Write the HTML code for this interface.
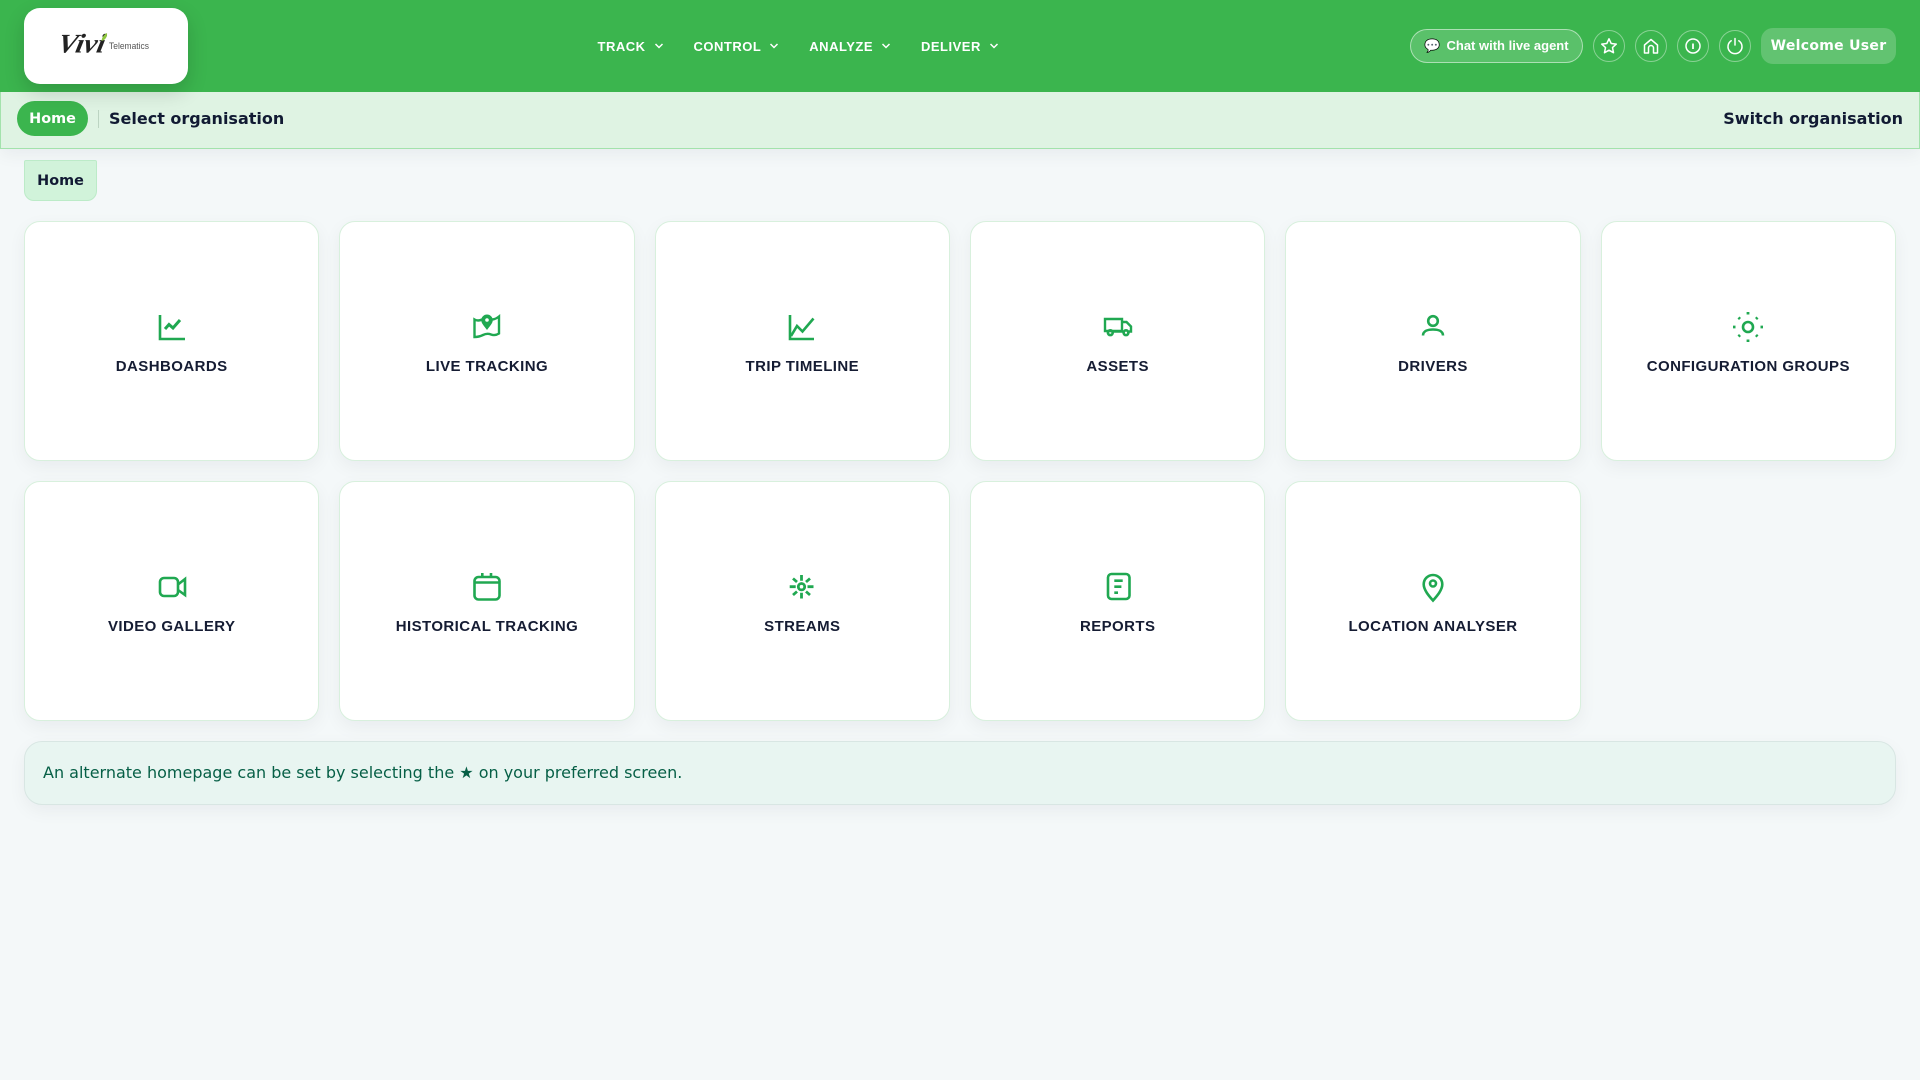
<!DOCTYPE html>
<html lang="en"><head><meta charset="utf-8"><title>Home</title>
<style>
*{box-sizing:border-box;margin:0;padding:0}
html,body{width:1920px;height:1080px;overflow:hidden}
body{background:#f4f8f9;font-family:"DejaVu Sans",sans-serif;position:relative;color:#111827}
.abs,.hdr,.sub,.card,.nav,.ic{position:absolute}
.hdr{left:0;top:0;width:1920px;height:92px;background:#3bb54e;z-index:3}
.logo{position:absolute;left:24px;top:8px;width:164px;height:76px;background:#fff;border-radius:16px;box-shadow:0 8px 20px rgba(0,0,0,.16)}
.nav{top:38px;font:bold 13px/18px "Liberation Sans",sans-serif;letter-spacing:.5px;color:#fff;white-space:nowrap}
.ch{position:absolute;top:42px}
.chat{position:absolute;left:1410px;top:29px;width:173px;height:34px;border:1px solid rgba(255,255,255,.5);border-radius:17px;background:rgba(255,255,255,.16);color:#fff;font:bold 13px/32px "Liberation Sans",sans-serif;white-space:nowrap;padding-left:13px}
.chat span{display:inline-block;width:22.5px;font-family:"DejaVu Sans",sans-serif;font-weight:normal}
.ic{top:30px;width:32px;height:32px;border:1px solid rgba(255,255,255,.4);border-radius:50%}
.ic svg{position:absolute;left:6px;top:6px}
.wel{position:absolute;left:1761px;top:28px;width:135px;height:36px;background:rgba(255,255,255,.2);border-radius:12px;color:#fff;font:bold 14px/36px "DejaVu Sans",sans-serif;text-align:center;letter-spacing:.3px;white-space:nowrap}
.sub{left:0;top:92px;width:1920px;height:57px;background:#dff3e3;border:1px solid #a3e2ac;border-top:0;box-shadow:0 6px 16px rgba(15,23,42,.05)}
.pill{position:absolute;left:17px;top:101px;width:71px;height:35px;background:#3bb54e;border-radius:18px;color:#fff;font:bold 14.4px/37px "DejaVu Sans",sans-serif;text-align:center;z-index:2}
.div{position:absolute;left:98px;top:110px;width:1px;height:18px;background:#bcd4c2;z-index:2}
.t{position:absolute;top:109px;font:bold 16px/20px "DejaVu Sans",sans-serif;color:#111a33;z-index:2;white-space:nowrap}
.crumb{position:absolute;left:24px;top:160px;width:73px;height:41px;background:#d1f3da;border:1px solid #bcebc8;border-radius:2px 2px 10px 10px;font:bold 14.4px/41px "DejaVu Sans",sans-serif;text-align:center;color:#111a33}
.card{width:295.33px;height:240px;background:#fff;border:1px solid #d8f0dd;border-radius:16px;box-shadow:0 6px 18px rgba(15,23,42,.05)}
.card svg{position:absolute;left:130.67px;top:89px;fill:none;stroke:#20a851;stroke-width:2.6}
.card b{position:absolute;left:0;right:0;top:136px;text-align:center;font:bold 15px/18px "Liberation Sans",sans-serif;letter-spacing:.42px;color:#151c33;white-space:nowrap}
.note{position:absolute;left:24px;top:741px;width:1872px;height:64px;background:#e8f5f1;border:1px solid #d8e6e3;border-radius:18px;box-shadow:0 6px 18px rgba(15,23,42,.05);color:#065f46;font:16px/62px "DejaVu Sans",sans-serif;padding-left:18px;white-space:nowrap}
</style></head><body>
<div class="hdr">
  <div class="logo">
    <svg width="164" height="76" viewBox="0 0 164 76">
      <text transform="translate(32.500 44.500) skewX(-12)" font-family="Liberation Serif" font-style="italic" font-weight="bold" font-size="27" fill="#222" textLength="47" lengthAdjust="spacingAndGlyphs">Vivi</text>
      <path d="M77.500 33c.5-4 2.500-6.500 5.500-8 .5 3.500-1.500 7-5.500 8z" fill="#8ec63f"/>
      <text x="85" y="41" font-family="Liberation Sans" font-size="9.500" fill="#555" textLength="40" lengthAdjust="spacingAndGlyphs">Telematics</text>
    </svg>
  </div>
  <div class="nav" style="left:597.500px">TRACK</div>
  <svg class="ch" style="left:654px" width="10" height="8" viewBox="0 0 10 8" fill="none" stroke="#fff" stroke-width="1.500"><path d="M1.500 2 5 5.500 8.500 2"/></svg>
  <div class="nav" style="left:693.500px">CONTROL</div>
  <svg class="ch" style="left:769px" width="10" height="8" viewBox="0 0 10 8" fill="none" stroke="#fff" stroke-width="1.500"><path d="M1.500 2 5 5.500 8.500 2"/></svg>
  <div class="nav" style="left:809.300px">ANALYZE</div>
  <svg class="ch" style="left:881px" width="10" height="8" viewBox="0 0 10 8" fill="none" stroke="#fff" stroke-width="1.500"><path d="M1.500 2 5 5.500 8.500 2"/></svg>
  <div class="nav" style="left:921px">DELIVER</div>
  <svg class="ch" style="left:989px" width="10" height="8" viewBox="0 0 10 8" fill="none" stroke="#fff" stroke-width="1.500"><path d="M1.500 2 5 5.500 8.500 2"/></svg>
  <div class="chat"><span>💬</span>Chat with live agent</div>
  <div class="ic" style="left:1593px"><svg width="18" height="18" viewBox="0 0 18 18" fill="none" stroke="#fff" stroke-width="1.500" stroke-linejoin="round"><path d="M9 1.800 11.200 6.500 16.300 7.100 12.500 10.600 13.500 15.700 9 13.200 4.500 15.700 5.500 10.600 1.700 7.100 6.800 6.500Z"/></svg></div>
  <div class="ic" style="left:1635px"><svg width="18" height="18" viewBox="0 0 18 18" fill="none" stroke="#fff" stroke-width="1.500" stroke-linejoin="round"><path d="M2.500 8 9 2.500 15.500 8V16H11.500V11A2.500 2.500 0 0 0 6.500 11V16H2.500Z"/></svg></div>
  <div class="ic" style="left:1677px"><svg width="18" height="18" viewBox="0 0 18 18" fill="none" stroke="#fff" stroke-width="1.500"><circle cx="9" cy="9" r="7"/><path d="M9 6.500V12" stroke-width="1.800"/></svg></div>
  <div class="ic" style="left:1719px"><svg width="18" height="18" viewBox="0 0 18 18" fill="none" stroke="#fff" stroke-width="1.500" stroke-linecap="round"><path d="M9 1.500V8M5.200 3.800A7 7 0 1 0 12.800 3.800"/></svg></div>
  <div class="wel">Welcome User</div>
</div>

<div class="sub"></div>
<div class="pill">Home</div><div class="div"></div>
<div class="t" style="left:109px">Select organisation</div>
<div class="t" style="right:17px">Switch organisation</div>
<div class="crumb">Home</div>

<div class="card" style="left:24px;top:221px"><svg width="32" height="32" viewBox="0 0 32 32"><path d="M4 4V28H29"/><path d="M9 18 13 13.500 17 17 24 9" stroke-width="3"/></svg><b>DASHBOARDS</b></div>
<div class="card" style="left:339.330px;top:221px"><svg width="32" height="32" viewBox="0 0 32 32"><path d="M11 8.500Q7 10.500 3.500 8.500V26Q8 26 12 24 16 22 20 23.500 24 25 28 22.500V5.500Q25 8 21.500 8.500" stroke-width="2.400"/><path d="M16 3.500A5.800 5.800 0 0 0 10.200 9.300C10.200 12 13 15 16 19 19 15 21.800 12 21.800 9.300A5.800 5.800 0 0 0 16 3.500Z" fill="#20a851" stroke="none"/><circle cx="16" cy="9" r="1.800" fill="#fff" stroke="none"/></svg><b>LIVE TRACKING</b></div>
<div class="card" style="left:654.670px;top:221px"><svg width="32" height="32" viewBox="0 0 32 32"><path d="M4 4V28H28"/><path d="M5 25 11 15 16.500 20.500 27.500 7.500"/></svg><b>TRIP TIMELINE</b></div>
<div class="card" style="left:970px;top:221px"><svg width="32" height="32" viewBox="0 0 32 32"><path d="M3 20V8H20V20ZM20 11H24.500L29 15.500V20.500H27M11 20.500H21" stroke-width="2.400"/><circle cx="8.300" cy="21.700" r="2.400"/><circle cx="24" cy="21.700" r="2.400"/></svg><b>ASSETS</b></div>
<div class="card" style="left:1285.330px;top:221px"><svg width="32" height="32" viewBox="0 0 32 32"><circle cx="16" cy="10" r="4.800"/><path d="M6 24.500C6 20 11 18.500 16 18.500S26 20 26 24.500"/></svg><b>DRIVERS</b></div>
<div class="card" style="left:1600.670px;top:221px"><svg width="32" height="32" viewBox="0 0 32 32"><circle cx="16" cy="16" r="5"/><g stroke-width="2.800" stroke-linecap="butt"><path d="M16 1V3.500M16 28.500V31M1 16H3.500M28.500 16H31M6.500 6.500 8 8M24 24 25.500 25.500M25.500 6.500 24 8M8 24 6.500 25.500"/></g></svg><b>CONFIGURATION GROUPS</b></div>

<div class="card" style="left:24px;top:481px"><svg width="32" height="32" viewBox="0 0 32 32"><rect x="4" y="7" width="18" height="18" rx="4"/><path d="M22 13.500 29 8V24L22 19"/></svg><b>VIDEO GALLERY</b></div>
<div class="card" style="left:339.330px;top:481px"><svg width="32" height="32" viewBox="0 0 32 32"><rect x="3.500" y="6" width="25" height="22.500" rx="4"/><path d="M3.500 11.500H28.500M11.300 2V6M20 2V6"/></svg><b>HISTORICAL TRACKING</b></div>
<div class="card" style="left:654.670px;top:481px"><svg width="32" height="32" viewBox="0 0 32 32"><circle cx="15.500" cy="15.700" r="3.200" stroke-width="2.800"/><path d="M15.500 4V9.700M15.500 21.700V27.500M3.700 15.700H9.700M21.500 15.700H27.500M7 7.500 11 11M20 20.500 24 24M24 7.500 20 11M11 20.500 7 24" stroke-width="2.800"/></svg><b>STREAMS</b></div>
<div class="card" style="left:970px;top:481px"><svg width="32" height="32" viewBox="0 0 32 32"><rect x="6" y="3" width="21.500" height="25" rx="3.500"/><path d="M12.300 9.700H20.700M12.300 15.700H19.400M12.300 21.700H16"/></svg><b>REPORTS</b></div>
<div class="card" style="left:1285.330px;top:481px"><svg width="32" height="32" viewBox="0 0 32 32"><path d="M16 4A9.300 9.300 0 0 0 6.700 13.300C6.700 19 12 25 16 29.500 20 25 25.300 19 25.300 13.300A9.300 9.300 0 0 0 16 4Z"/><circle cx="16" cy="12.500" r="3"/></svg><b>LOCATION ANALYSER</b></div>

<div class="note">An alternate homepage can be set by selecting the ★ on your preferred screen.</div>
</body></html>
